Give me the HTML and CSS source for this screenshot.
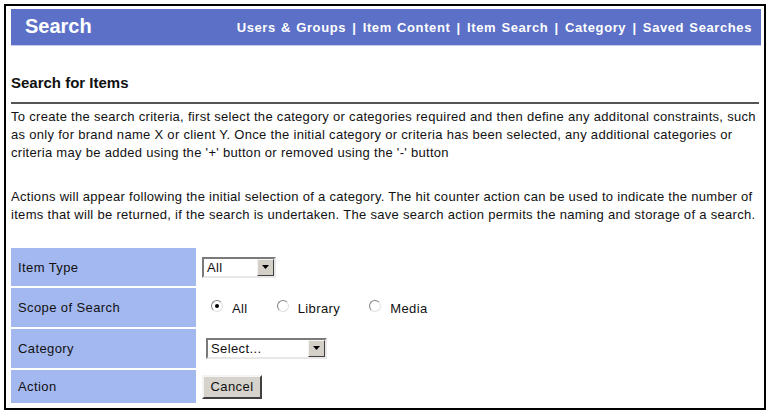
FILE: index.html
```html
<!DOCTYPE html>
<html lang="en">
<head>
    <meta charset="UTF-8">
    <meta name="viewport" content="width=device-width, initial-scale=1.0">
    <title>Search</title>
    <link rel="stylesheet" href="styles.css">
</head>
<body>
    <div class="frame">
        <header>
            <h1>Search</h1>
            <nav>
                <a href="#">Users &amp; Groups</a> |
                <a href="#">Item Content</a> |
                <a href="#">Item Search</a> |
                <a href="#">Category</a> |
                <a href="#">Saved Searches</a>
            </nav>
        </header>
        <main>
            <h2>Search for Items</h2>
            <p>To create the search criteria, first select the category or categories required and then define any additonal constraints, such as only for brand name X or client Y. Once the initial category or criteria has been selected, any additional categories or criteria may be added using the '+' button or removed using the '-' button</p>
            <p>Actions will appear following the initial selection of a category. The hit counter action can be used to indicate the number of items that will be returned, if the search is undertaken. The save search action permits the naming and storage of a search.</p>

            <table class="criteria">
                <tr class="row-type">
                    <th>Item Type</th>
                    <td>
                        <span class="dropdown type-select">
                            <span class="value">All</span>
                            <span class="arrow"><svg width="9" height="5" viewBox="0 0 9 5"><path d="M1 0h7L4.5 4z" fill="#000"/></svg></span>
                        </span>
                    </td>
                </tr>
                <tr class="row-scope">
                    <th>Scope of Search</th>
                    <td>
                        <div class="radios">
                            <label class="radio"><input type="radio" name="scope" checked> All</label>
                            <label class="radio"><input type="radio" name="scope"> Library</label>
                            <label class="radio"><input type="radio" name="scope"> Media</label>
                        </div>
                    </td>
                </tr>
                <tr class="row-category">
                    <th>Category</th>
                    <td>
                        <span class="dropdown cat-select">
                            <span class="value">Select...</span>
                            <span class="arrow"><svg width="9" height="5" viewBox="0 0 9 5"><path d="M1 0h7L4.5 4z" fill="#000"/></svg></span>
                        </span>
                    </td>
                </tr>
                <tr class="row-action">
                    <th>Action</th>
                    <td><button type="button">Cancel</button></td>
                </tr>
            </table>
        </main>
    </div>
</body>
</html>
```

FILE: styles.css
```css
body {
    font-family: 'Liberation Sans', Arial, sans-serif;
    margin: 0;
    padding: 4px;
    background-color: #fff;
    color: #111;
}
.frame {
    border: 2px solid #000;
    box-sizing: border-box;
    height: 406px;
    padding: 3px 3px 0 5px;
}
header {
    background: #5b70c6;
    color: #fff;
    height: 37px;
    padding: 0 9px 0 14px;
    display: flex;
    justify-content: space-between;
    align-items: center;
    border-bottom: 1px solid #c4ccec;
    box-sizing: border-box;
}
header h1 {
    margin: 0;
    font-size: 20px;
    font-weight: bold;
    padding-bottom: 2px;
}
header nav {
    font-size: 13px;
    font-weight: bold;
    letter-spacing: 0.6px;
    word-spacing: 2px;
}
header nav a {
    color: #fff;
    text-decoration: none;
    word-spacing: 1px;
}
main {
    padding: 0 2px 0 0;
}
main h2 {
    font-size: 15px;
    margin: 28px 0 0;
    line-height: 18px;
    padding-bottom: 10px;
    border-bottom: 2px solid #555;
}
main p {
    font-size: 13px;
    letter-spacing: 0.3px;
    line-height: 18px;
    margin: 4px 0 26px;
}
main p + p {
    margin: 0 0 22px;
}
.criteria {
    border-spacing: 2px;
    margin-left: -2px;
    font-size: 13px;
    letter-spacing: 0.4px;
}
.criteria th {
    background: #a4b8f0;
    width: 178px;
    padding: 0 0 0 7px;
    text-align: left;
    font-weight: normal;
}
.criteria td {
    padding: 0 0 0 4px;
}
.row-type th { height: 38px; }
.row-scope th { height: 39px; }
.row-category th { height: 39px; }
.row-action th { height: 33px; }

.dropdown {
    display: inline-flex;
    align-items: stretch;
    height: 21px;
    box-sizing: border-box;
    border: 2px solid;
    border-color: #7a7a7a #e8e8e8 #e8e8e8 #7a7a7a;
    background: #fff;
    vertical-align: middle;
}
.dropdown .value {
    flex: 1;
    padding-left: 3px;
    line-height: 17px;
}
.dropdown .arrow {
    width: 15px;
    background: #d4d0c8;
    border: 1px solid;
    border-color: #f4f4f4 #404040 #404040 #f4f4f4;
    display: flex;
    align-items: center;
    justify-content: center;
}
.type-select { width: 74px; }
.cat-select { width: 121px; margin-left: 4px; }

.radios {
    display: flex;
    padding-left: 9px;
    padding-top: 2px;
    gap: 29px;
}
.radio {
    display: inline-flex;
    align-items: center;
    gap: 9px;
}
.radio input {
    appearance: none;
    margin: 0 0 6px;
    width: 12px;
    height: 12px;
    border-radius: 50%;
    border: 1px solid;
    border-color: #808080 #e0e0e0 #e0e0e0 #808080;
    background: #fff;
    position: relative;
}
.radio input:checked::after {
    content: "";
    position: absolute;
    left: 3px;
    top: 3px;
    width: 4px;
    height: 4px;
    border-radius: 50%;
    background: #000;
}
button {
    font-family: inherit;
    font-size: 13px;
    letter-spacing: 0.4px;
    width: 60px;
    height: 24px;
    background: #d6d3cc;
    border: 2px solid;
    border-color: #f4f4f4 #404040 #404040 #f4f4f4;
    color: #111;
    padding: 0;
}
```
